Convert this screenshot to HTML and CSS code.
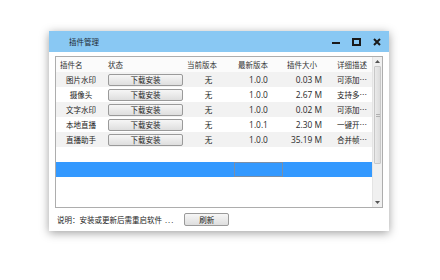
FILE: index.html
```html
<!DOCTYPE html>
<html lang="zh">
<head>
<meta charset="utf-8">
<title>插件管理</title>
<link rel="stylesheet" href="styles.css">
</head>
<body>
<div class="window">
  <div class="titlebar">
    <span class="title">插件管理</span>
    <div class="controls">
      <span class="ctl ctl-min"></span>
      <span class="ctl ctl-max"></span>
      <svg class="ctl-close" width="8" height="8" viewBox="0 0 8 8"><path d="M1 1L7 7M7 1L1 7" stroke="#1a1a1a" stroke-width="2"/></svg>
    </div>
  </div>
  <div class="content">
    <div class="grid">
      <div class="table">
        <div class="row head">
          <div class="c c1">插件名</div>
          <div class="c c2">状态</div>
          <div class="c c3">当前版本</div>
          <div class="c c4">最新版本</div>
          <div class="c c5">插件大小</div>
          <div class="c c6">详细描述</div>
        </div>
        <div class="row odd">
          <div class="c c1 name">图片水印</div>
          <div class="c c2"><span class="btn">下载安装</span></div>
          <div class="c c3 mid">无</div>
          <div class="c c4 mid num">1.0.0</div>
          <div class="c c5 right num">0.03 M</div>
          <div class="c c6">可添加…</div>
        </div>
        <div class="row">
          <div class="c c1 name">摄像头</div>
          <div class="c c2"><span class="btn">下载安装</span></div>
          <div class="c c3 mid">无</div>
          <div class="c c4 mid num">1.0.0</div>
          <div class="c c5 right num">2.67 M</div>
          <div class="c c6">支持多…</div>
        </div>
        <div class="row odd">
          <div class="c c1 name">文字水印</div>
          <div class="c c2"><span class="btn">下载安装</span></div>
          <div class="c c3 mid">无</div>
          <div class="c c4 mid num">1.0.0</div>
          <div class="c c5 right num">0.02 M</div>
          <div class="c c6">可添加…</div>
        </div>
        <div class="row">
          <div class="c c1 name">本地直播</div>
          <div class="c c2"><span class="btn">下载安装</span></div>
          <div class="c c3 mid">无</div>
          <div class="c c4 mid num">1.0.1</div>
          <div class="c c5 right num">2.30 M</div>
          <div class="c c6">一键开…</div>
        </div>
        <div class="row odd">
          <div class="c c1 name">直播助手</div>
          <div class="c c2"><span class="btn">下载安装</span></div>
          <div class="c c3 mid">无</div>
          <div class="c c4 mid num">1.0.0</div>
          <div class="c c5 right num">35.19 M</div>
          <div class="c c6">合并帧…</div>
        </div>
        <div class="row"></div>
        <div class="row selected">
          <div class="c c1"></div>
          <div class="c c2"></div>
          <div class="c c3"></div>
          <div class="c c4 focus"></div>
          <div class="c c5"></div>
          <div class="c c6"></div>
        </div>
      </div>
      <div class="scrollbar">
        <div class="sb-arrow"><svg width="5" height="3" viewBox="0 0 5 3"><path d="M0 3L2.5 0L5 3Z" fill="#555"/></svg></div>
        <div class="sb-thumb"><span class="grip"></span></div>
        <div class="sb-track"></div>
        <div class="sb-arrow"><svg width="5" height="3" viewBox="0 0 5 3"><path d="M0 0L2.5 3L5 0Z" fill="#555"/></svg></div>
      </div>
    </div>
    <div class="footer">
      <span class="note">说明：安装或更新后需重启软件</span>
      <span class="dots">...</span>
      <span class="btn refresh">刷新</span>
    </div>
  </div>
</div>
</body>
</html>
```

FILE: styles.css
```css
html, body {
  margin: 0;
  padding: 0;
  background: #ffffff;
}

body {
  width: 440px;
  height: 280px;
  padding: 31px 0 0 49px;
  box-sizing: border-box;
  font-family: "Noto Sans CJK SC", "Noto Sans", sans-serif;
  font-size: 7.5px;
  color: #222;
}

.window {
  width: 340px;
  height: 200px;
  background: #fff;
  box-shadow: 0 2px 9px rgba(0, 0, 0, 0.38);
  display: flex;
  flex-direction: column;
}

.titlebar {
  height: 21px;
  background: #89c8f3;
  display: flex;
  align-items: center;
  padding-left: 20px;
  flex-shrink: 0;
}

.title {
  font-size: 7.5px;
  color: #1e2a33;
  line-height: 1;
}

.controls {
  margin-left: auto;
  display: flex;
  align-items: center;
  gap: 12px;
  padding-right: 8px;
}

.ctl-min {
  width: 8px;
  height: 2px;
  background: #1a1a1a;
  margin-top: 2px;
}

.ctl-max {
  width: 5px;
  height: 4px;
  border: 2px solid #1a1a1a;
}

.ctl-close {
  display: block;
}

.content {
  flex: 1;
  display: flex;
  flex-direction: column;
  padding: 4px 6px 0 6px;
}

.grid {
  height: 152px;
  border: 1px solid #adadad;
  box-sizing: border-box;
  display: flex;
}

.table {
  width: 316px;
  display: flex;
  flex-direction: column;
}

.row {
  height: 15px;
  display: flex;
  align-items: center;
  flex-shrink: 0;
}

.row.odd {
  background: #f2f2f2;
}

.row.head {
  background: #fbfbfb;
  color: #333;
}

.row.selected {
  background: #3399ff;
}

.c {
  box-sizing: border-box;
  height: 100%;
  display: flex;
  align-items: center;
  padding-left: 4px;
  white-space: nowrap;
  overflow: hidden;
}

.c1 { width: 50px; }
.c2 { width: 77px; padding-left: 2px; }
.c3 { width: 51px; }
.c4 { width: 49px; }
.c5 { width: 50px; }
.c6 { width: 39px; }

.name {
  justify-content: center;
  padding-left: 0;
}

.mid {
  justify-content: center;
  padding-left: 0;
}

.right {
  justify-content: flex-end;
  padding-left: 0;
  padding-right: 11px;
}

.num {
  font-family: "Open Sans", "Liberation Sans", sans-serif;
  font-size: 8.4px;
  color: #2a2a2a;
}

.focus {
  border: 1px solid #7a8fa8;
}

.btn {
  box-sizing: border-box;
  width: 75px;
  height: 12px;
  border: 1px solid #9a9a9a;
  border-radius: 2px;
  background: linear-gradient(#f6f6f6, #dedede);
  display: flex;
  align-items: center;
  justify-content: center;
  color: #222;
  font-size: 7.5px;
}

.scrollbar {
  width: 10px;
  background: #f0f0f0;
  border-left: 1px solid #e4e4e4;
  display: flex;
  flex-direction: column;
}

.sb-arrow {
  height: 9px;
  display: flex;
  align-items: center;
  justify-content: center;
  flex-shrink: 0;
}

.sb-arrow svg {
  display: block;
}

.sb-thumb {
  height: 98px;
  margin: 0 1px;
  box-sizing: border-box;
  border: 1px solid #c8c8c8;
  border-radius: 1px;
  background: linear-gradient(90deg, #eaeaea, #dcdcdc);
  display: flex;
  align-items: center;
  justify-content: center;
  flex-shrink: 0;
}

.grip {
  width: 4px;
  height: 3px;
  border-top: 1px solid #b0b0b0;
  border-bottom: 1px solid #b0b0b0;
  box-sizing: border-box;
}

.sb-track {
  flex: 1;
}

.footer {
  height: 23px;
  display: flex;
  align-items: center;
  padding-left: 2px;
}

.note {
  color: #222;
}

.dots {
  margin-left: 3px;
  font-family: "Open Sans", "Liberation Sans", sans-serif;
  font-size: 8px;
  letter-spacing: 1px;
  color: #222;
}

.refresh {
  width: 45px;
  height: 13px;
  margin-left: 10px;
}
```
